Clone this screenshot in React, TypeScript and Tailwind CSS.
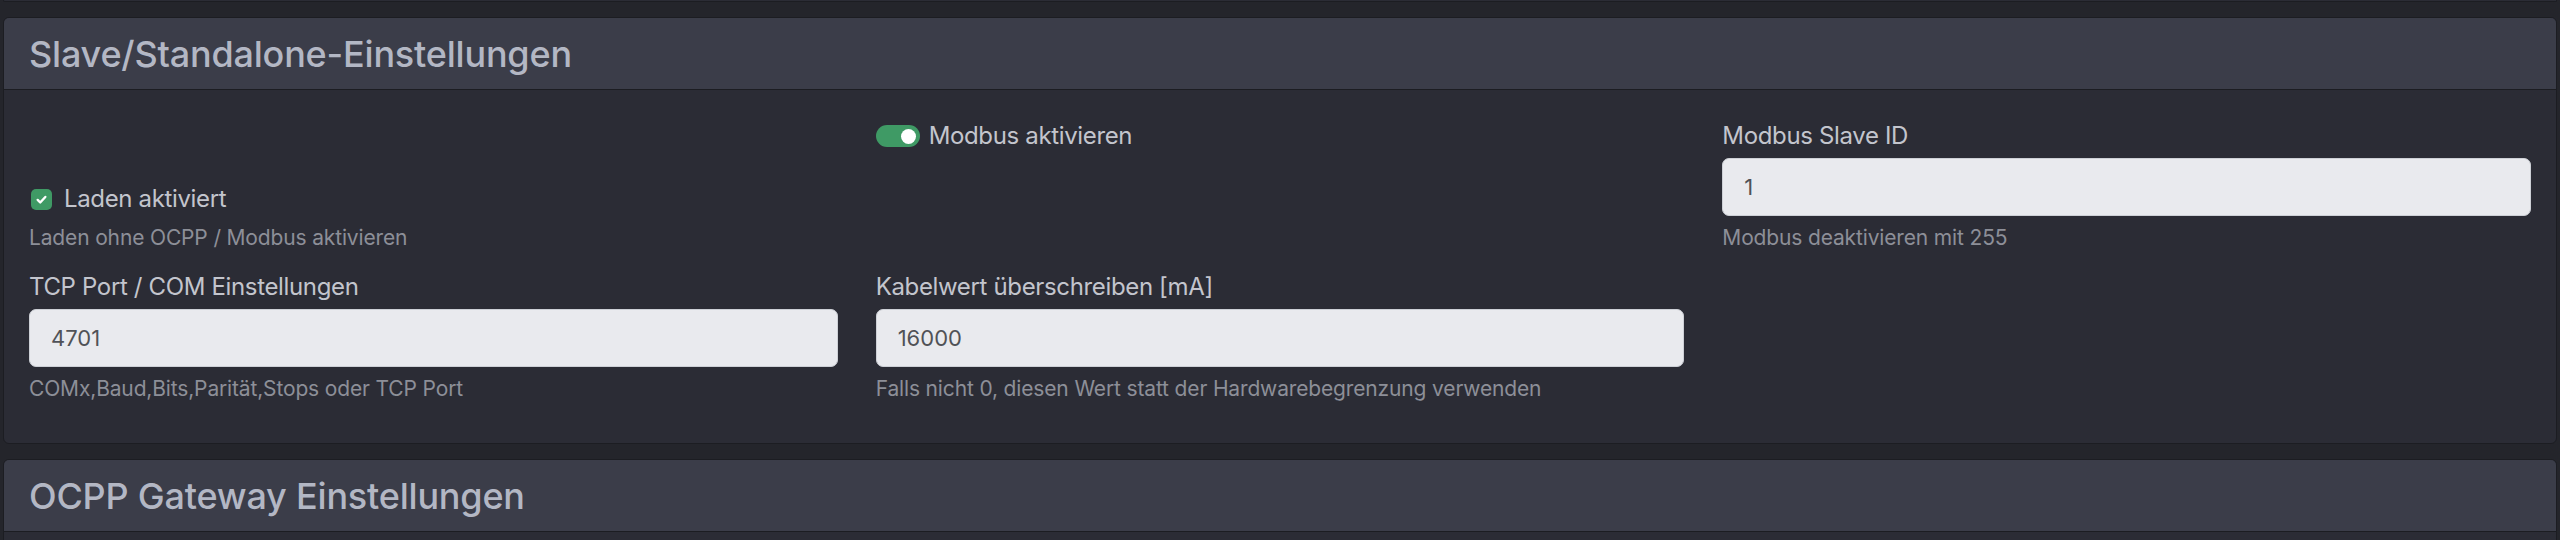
import React from "react";

const font = { fontFamily: "Inter, 'Noto Sans', sans-serif" };

function Field({ label, value, help }: { label: string; value: string; help: string }) {
  return (
    <div className="flex flex-col">
      <label className="text-[24px] leading-[36px] tracking-[-0.35px] text-[#c3c5cd]">{label}</label>
      <div className="mt-[4px] flex h-[58px] items-center rounded-[7px] border border-[#cdd0d6] bg-[#e9eaee] px-[21px] text-[22px] text-[#505257]">
        {value}
      </div>
      <p className="mt-[6px] text-[21px] leading-[31px] tracking-[-0.15px] text-[#8d8f98]">{help}</p>
    </div>
  );
}

function Checkbox() {
  return (
    <span className="ml-[2px] flex h-[21px] w-[21px] items-center justify-center rounded-[5px] bg-[#3f9a65]">
      <svg viewBox="0 0 20 20" className="h-[17px] w-[17px]">
        <path d="M5.5 10.5l3 3l6-6.5" fill="none" stroke="#fff" strokeWidth="2.8" strokeLinecap="round" strokeLinejoin="round" />
      </svg>
    </span>
  );
}

function Switch() {
  return (
    <span className="flex h-[22px] w-[44px] items-center justify-end rounded-full bg-[#3f9a65] pr-[4px]">
      <span className="h-[15px] w-[15px] rounded-full bg-white" />
    </span>
  );
}

function CardHeader({ title }: { title: string }) {
  return (
    <div className="flex h-[72px] items-center border-b border-[#1c1d22] bg-[#3b3d49] px-[25px]">
      <h4 className="text-[36px] font-medium tracking-[-0.2px] text-[#b3b7c4]">{title}</h4>
    </div>
  );
}

export default function App() {
  return (
    <div className="h-[540px] overflow-hidden bg-[#24252b] px-[3px]" style={font}>
      {/* tail of the previous card */}
      <div className="h-[2px] rounded-b-[6px] border-x border-b border-[#1c1d22] bg-[#2b2c35]" />

      <section className="mt-[15px] overflow-hidden rounded-[6px] border border-[#1c1d22] bg-[#2b2c35]">
        <CardHeader title="Slave/Standalone-Einstellungen" />
        <div className="grid grid-cols-3 gap-x-[38px] gap-y-[16px] px-[25px] pt-[28px] pb-[39px]">
          <div className="flex flex-col justify-end">
            <div className="flex h-[36px] items-center gap-[12px]">
              <Checkbox />
              <span className="text-[24px] tracking-[-0.35px] text-[#c3c5cd]">Laden aktiviert</span>
            </div>
            <p className="mt-[5px] text-[21px] leading-[31px] tracking-[-0.15px] text-[#8d8f98]">
              Laden ohne OCPP / Modbus aktivieren
            </p>
          </div>
          <div>
            <div className="flex h-[36px] items-center gap-[9px]">
              <Switch />
              <span className="text-[24px] tracking-[-0.35px] text-[#c3c5cd]">Modbus aktivieren</span>
            </div>
          </div>
          <Field label="Modbus Slave ID" value="1" help="Modbus deaktivieren mit 255" />

          <Field label="TCP Port / COM Einstellungen" value="4701" help="COMx,Baud,Bits,Parität,Stops oder TCP Port" />
          <Field
            label="Kabelwert überschreiben [mA]"
            value="16000"
            help="Falls nicht 0, diesen Wert statt der Hardwarebegrenzung verwenden"
          />
          <div />
        </div>
      </section>

      <section className="mt-[15px] overflow-hidden rounded-t-[6px] border border-[#1c1d22] bg-[#2b2c35]">
        <CardHeader title="OCPP Gateway Einstellungen" />
        <div className="h-[40px]" />
      </section>
    </div>
  );
}
